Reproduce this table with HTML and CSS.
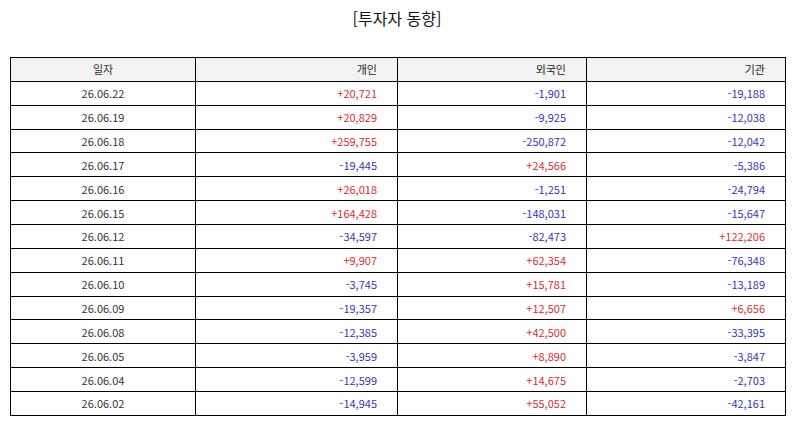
FILE: index.html
```html
<!DOCTYPE html>
<html lang="ko">
<head>
<meta charset="utf-8">
<link rel="stylesheet" href="styles.css">
</head>
<body>
<h1 class="title">[투자자 동향]</h1>
<table class="grid">
<colgroup>
<col class="c1"><col class="c2"><col class="c3"><col class="c4">
</colgroup>
<thead>
<tr><th class="ctr">일자</th><th>개인</th><th>외국인</th><th>기관</th></tr>
</thead>
<tbody>
<tr><td class="ctr">26.06.22</td><td class="up">+20,721</td><td class="dn">-1,901</td><td class="dn">-19,188</td></tr>
<tr><td class="ctr">26.06.19</td><td class="up">+20,829</td><td class="dn">-9,925</td><td class="dn">-12,038</td></tr>
<tr><td class="ctr">26.06.18</td><td class="up">+259,755</td><td class="dn">-250,872</td><td class="dn">-12,042</td></tr>
<tr><td class="ctr">26.06.17</td><td class="dn">-19,445</td><td class="up">+24,566</td><td class="dn">-5,386</td></tr>
<tr><td class="ctr">26.06.16</td><td class="up">+26,018</td><td class="dn">-1,251</td><td class="dn">-24,794</td></tr>
<tr><td class="ctr">26.06.15</td><td class="up">+164,428</td><td class="dn">-148,031</td><td class="dn">-15,647</td></tr>
<tr><td class="ctr">26.06.12</td><td class="dn">-34,597</td><td class="dn">-82,473</td><td class="up">+122,206</td></tr>
<tr><td class="ctr">26.06.11</td><td class="up">+9,907</td><td class="up">+62,354</td><td class="dn">-76,348</td></tr>
<tr><td class="ctr">26.06.10</td><td class="dn">-3,745</td><td class="up">+15,781</td><td class="dn">-13,189</td></tr>
<tr><td class="ctr">26.06.09</td><td class="dn">-19,357</td><td class="up">+12,507</td><td class="up">+6,656</td></tr>
<tr><td class="ctr">26.06.08</td><td class="dn">-12,385</td><td class="up">+42,500</td><td class="dn">-33,395</td></tr>
<tr><td class="ctr">26.06.05</td><td class="dn">-3,959</td><td class="up">+8,890</td><td class="dn">-3,847</td></tr>
<tr><td class="ctr">26.06.04</td><td class="dn">-12,599</td><td class="up">+14,675</td><td class="dn">-2,703</td></tr>
<tr><td class="ctr">26.06.02</td><td class="dn">-14,945</td><td class="up">+55,052</td><td class="dn">-42,161</td></tr>
</tbody>
</table>
</body>
</html>
```
FILE: styles.css
```css
html, body {
  margin: 0;
  padding: 0;
  background: #ffffff;
}
body {
  font-family: "Noto Sans CJK KR", "Noto Sans", sans-serif;
  color: #222222;
}
.title {
  margin: 0;
  padding-top: 7px;
  height: 57px;
  box-sizing: border-box;
  text-align: center;
  font-size: 16px;
  font-weight: normal;
  line-height: 22px;
  color: #111111;
}
.grid {
  margin-left: 10px;
  width: 775px;
  border-collapse: collapse;
  table-layout: fixed;
  font-size: 11px;
}
.c1 { width: 185px; }
.c2 { width: 202px; }
.c3 { width: 189px; }
.c4 { width: 199px; }
.grid th, .grid td {
  border: 1px solid #000000;
  height: 23.87px;
  padding: 0 20px 0 4px;
  box-sizing: border-box;
  text-align: right;
  font-weight: normal;
  line-height: 14px;
  white-space: nowrap;
}
.grid th {
  background: #f2f2f2;
  color: #222222;
}
.grid .ctr {
  text-align: center;
  padding: 0;
  color: #333333;
}
.up { color: #e22b2b; }
.dn { color: #3434c4; }
```
